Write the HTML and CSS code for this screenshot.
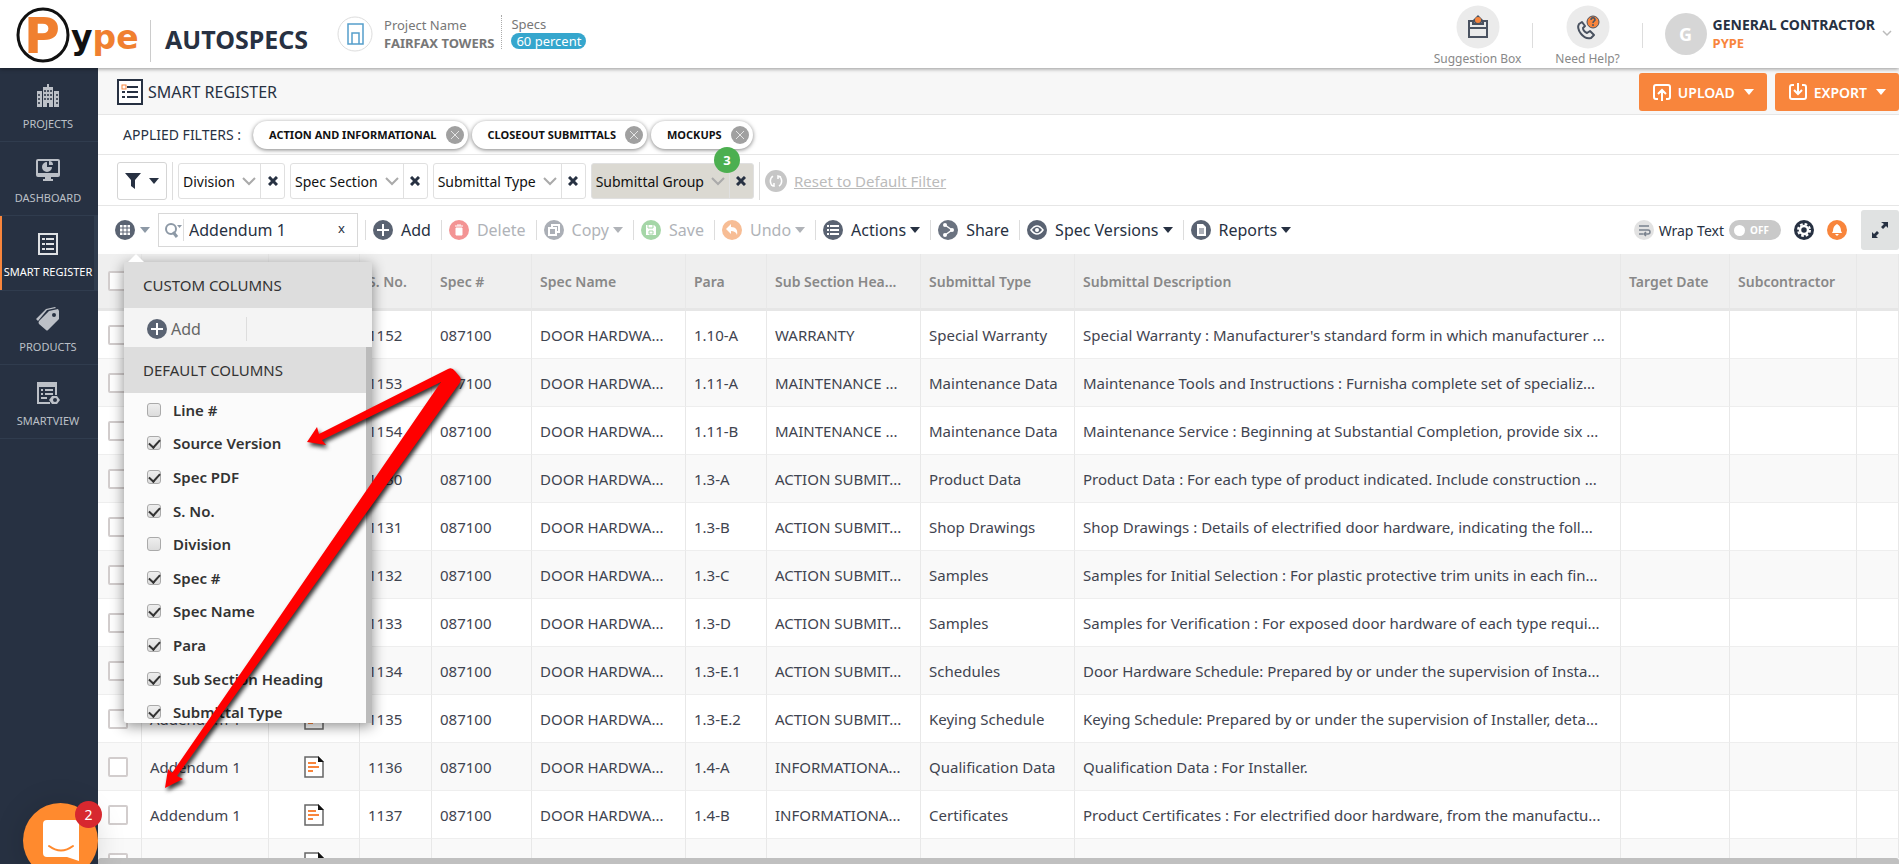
FILE: index.html
```html
<!DOCTYPE html>
<html lang="en">
<head>
    <meta charset="UTF-8">
    <meta name="viewport" content="width=device-width, initial-scale=1.0">
    <title>Pype AutoSpecs - Smart Register</title>
    <link rel="stylesheet" href="styles.css">
</head>
<body>
    <!-- shared icons -->
    <svg class="sprite" aria-hidden="true">
        <symbol id="i-doc" viewBox="0 0 20 22">
            <path d="M1 1h13l5 5v15H1z" fill="#fff" stroke="#666" stroke-width="1.5"/>
            <path d="M14 0l6 6h-6z" fill="#111"/>
            <path d="M4 7h8M4 11h11M4 15h5" stroke="#f8853c" stroke-width="2"/>
        </symbol>
        <symbol id="i-chev" viewBox="0 0 14 10">
            <path d="M1 2l6 6 6-6" fill="none" stroke="#aaa" stroke-width="2"/>
        </symbol>
        <symbol id="i-x" viewBox="0 0 10 10">
            <path d="M1 1l8 8M9 1l-8 8" stroke="#273142" stroke-width="3"/>
        </symbol>
        <symbol id="i-chipx" viewBox="0 0 18 18">
            <circle cx="9" cy="9" r="9" fill="#a0a0a0"/>
            <path d="M5 5l8 8M13 5l-8 8" stroke="#e4e4e4" stroke-width="1"/>
        </symbol>
        <symbol id="i-add" viewBox="0 0 20 20">
            <circle cx="10" cy="10" r="10" fill="#5a6372"/>
            <path d="M10 4v12M4 10h12" stroke="#fff" stroke-width="2"/>
        </symbol>
    </svg>

    <header class="header">
        <a class="logo" href="#" aria-label="Pype">
            <svg width="140" height="60" viewBox="0 0 140 60">
                <ellipse cx="43" cy="31" rx="25" ry="26" fill="#fff" stroke="#111" stroke-width="3"/>
                <text class="logo-text" x="24" y="49" font-size="49" fill="#f08030">P</text>
                <text class="logo-text" x="71" y="45" font-size="33"><tspan fill="#111">y</tspan><tspan fill="#f08030">pe</tspan></text>
            </svg>
        </a>
        <div class="product">AUTOSPECS</div>
        <div class="project">
            <svg width="36" height="36" viewBox="0 0 36 36">
                <circle cx="18" cy="18" r="17" fill="#fff" stroke="#ddd"/>
                <path d="M11 28V8h15v20zM15 28v-11h7v11" fill="none" stroke="#559fcb" stroke-width="1.5"/>
            </svg>
            <div class="project-name">
                <span>Project Name</span>
                <strong>FAIRFAX TOWERS</strong>
            </div>
            <div class="specs">
                <span>Specs</span>
                <span class="pill">60 percent</span>
            </div>
        </div>
        <nav class="help">
            <a class="help-item" href="#">
                <svg width="44" height="44" viewBox="0 0 44 44">
                    <circle cx="22" cy="22" r="21.500" fill="#ebebeb"/>
                    <path d="M13 16h18v16H13zM13 23h18M17 16v3h10v-3" fill="none" stroke="#4a5260" stroke-width="2"/>
                    <path d="M22 10l5 5-2 4h-6l-2-4z" fill="#4a5260"/>
                    <circle cx="22" cy="15" r="3" fill="#f8853c"/>
                </svg>
                <span>Suggestion Box</span>
            </a>
            <a class="help-item" href="#">
                <svg width="44" height="44" viewBox="0 0 44 44">
                    <circle cx="22" cy="22" r="21.500" fill="#ebebeb"/>
                    <path d="M13 19c-3 5 4 16 12 14l3-3-4-4-3 2c-2-1-4-3-4-5l2-2-3-4z" fill="none" stroke="#4a5260" stroke-width="2" stroke-linejoin="round"/>
                    <circle cx="27" cy="17" r="6" fill="#f8853c" stroke="#4a5260" stroke-width="1"/>
                    <path d="M25 15c0-3 4-3 4 0 0 1-2 1-2 3M27 19v2" fill="none" stroke="#4a5260" stroke-width="1.500"/>
                </svg>
                <span>Need Help?</span>
            </a>
        </nav>
        <button class="user">
            <span class="avatar">G</span>
            <span class="user-name">GENERAL CONTRACTOR<em>PYPE</em></span>
            <svg width="12" height="8" viewBox="0 0 12 8"><path d="M2 1l4 4 4-4" fill="none" stroke="#bbb" stroke-width="1.500"/></svg>
        </button>
    </header>

    <div class="main">
        <nav class="sidebar">
            <a href="#">
                <svg width="24" height="24" viewBox="0 0 24 24" fill="#bcc0c7">
                    <path d="M1 7h5v16H1zM18 7h5v16h-5zM7 3h4V0h2v3h4v20H7z"/>
                    <path d="M9 6v11M12 6v11M15 6v11M3 10v11M21 10v11" stroke="#273142" stroke-width="1.500" stroke-dasharray="2 2"/>
                    <path d="M11 19h2v4h-2z" fill="#273142"/>
                </svg>
                PROJECTS
            </a>
            <a href="#">
                <svg width="24" height="24" viewBox="0 0 24 24">
                    <rect x="1" y="2" width="22" height="16" rx="1" fill="none" stroke="#bcc0c7" stroke-width="2"/>
                    <path d="M1 15h22v3H1zM9 18h6v3h2v2H7v-2h2z" fill="#bcc0c7"/>
                    <path d="M11 4v5h5a5 5 0 1 1-5-5z" fill="#bcc0c7"/>
                    <path d="M13 3a4 4 0 0 1 4 4h-4z" fill="#bcc0c7"/>
                </svg>
                DASHBOARD
            </a>
            <a class="active" href="#">
                <svg width="24" height="24" viewBox="0 0 24 24">
                    <rect x="3" y="2" width="18" height="20" fill="none" stroke="#dfe1e4" stroke-width="2"/>
                    <path d="M6 7h3M6 12h3M6 17h3M10 7h8M10 12h8M10 17h8" stroke="#dfe1e4" stroke-width="2"/>
                </svg>
                SMART REGISTER
            </a>
            <a href="#">
                <svg width="24" height="24" viewBox="0 0 24 24" fill="#bcc0c7">
                    <path d="M0 12L10 2l9-2 1 1-9 2-9 11z"/>
                    <path d="M13 4l9-2 1 2v8l-11 11q-1 1-2 0l-7-6q-1-1 0-3z"/>
                    <circle cx="18" cy="8" r="2" fill="#273142"/>
                </svg>
                PRODUCTS
            </a>
            <a href="#">
                <svg width="24" height="24" viewBox="0 0 24 24">
                    <path d="M2 2h18v12M2 2v20h12" fill="none" stroke="#bcc0c7" stroke-width="2"/>
                    <path d="M1 1h20v5H1z" fill="#bcc0c7"/>
                    <path d="M5 9h2M5 13h2M9 9h8M9 13h8M5 17h6" stroke="#bcc0c7" stroke-width="2"/>
                    <path d="M13 19l3-4h5l3 4-3 4h-5z" fill="#bcc0c7"/>
                    <circle cx="19" cy="19" r="2" fill="#273142"/>
                </svg>
                SMARTVIEW
            </a>
        </nav>

        <main class="content">
            <div class="title-bar">
                <svg width="26" height="26" viewBox="0 0 26 26">
                    <rect x="1" y="1" width="24" height="24" fill="#fff" stroke="#273142" stroke-width="2"/>
                    <path d="M10 8h11M10 13h11M10 18h11M5 13h3M5 18h3" stroke="#273142" stroke-width="2"/>
                    <rect x="5" y="6" width="4" height="4" fill="none" stroke="#f8853c"/>
                </svg>
                <h1>SMART REGISTER</h1>
                <button class="btn-orange">
                    <svg width="20" height="20" viewBox="0 0 20 20" fill="none" stroke="#fff" stroke-width="2"><path d="M6 17H4q-2 0-2-2V5q0-2 2-2h12q2 0 2 2v10q0 2-2 2h-2M10 19V8M6 12l4-4 4 4"/></svg>
                    UPLOAD <i class="caret"></i>
                </button>
                <button class="btn-orange">
                    <svg width="20" height="20" viewBox="0 0 20 20" fill="none" stroke="#fff" stroke-width="2"><path d="M6 3H4q-2 0-2 2v10q0 2 2 2h12q2 0 2-2V5q0-2-2-2h-2M10 1v11M6 8l4 4 4-4"/></svg>
                    EXPORT <i class="caret"></i>
                </button>
            </div>

            <div class="applied">
                <span class="applied-label">APPLIED FILTERS :</span>
                <span class="chip">ACTION AND INFORMATIONAL <button aria-label="Remove"><svg width="18" height="18"><use href="#i-chipx"/></svg></button></span>
                <span class="chip">CLOSEOUT SUBMITTALS <button aria-label="Remove"><svg width="18" height="18"><use href="#i-chipx"/></svg></button></span>
                <span class="chip">MOCKUPS <button aria-label="Remove"><svg width="18" height="18"><use href="#i-chipx"/></svg></button></span>
            </div>

            <div class="filters">
                <button class="funnel" aria-label="Filters">
                    <svg width="16" height="16" viewBox="0 0 16 16"><path d="M0 0h16l-6 7v9l-4-3V7z" fill="#273142"/></svg>
                    <i class="caret"></i>
                </button>
                <span class="line"></span>
                <div class="filter"><button>Division <svg width="14" height="10"><use href="#i-chev"/></svg></button><button class="remove" aria-label="Remove"><svg width="10" height="10"><use href="#i-x"/></svg></button></div>
                <div class="filter"><button>Spec Section <svg width="14" height="10"><use href="#i-chev"/></svg></button><button class="remove" aria-label="Remove"><svg width="10" height="10"><use href="#i-x"/></svg></button></div>
                <div class="filter"><button>Submittal Type <svg width="14" height="10"><use href="#i-chev"/></svg></button><button class="remove" aria-label="Remove"><svg width="10" height="10"><use href="#i-x"/></svg></button></div>
                <div class="filter selected"><button>Submittal Group <svg width="14" height="10"><use href="#i-chev"/></svg></button><button class="remove" aria-label="Remove"><svg width="10" height="10"><use href="#i-x"/></svg></button><span class="count">3</span></div>
                <span class="line"></span>
                <a class="reset" href="#">
                    <svg width="22" height="22" viewBox="0 0 22 22"><circle cx="11" cy="11" r="11" fill="#c6c6c6"/><path d="M8 6a6 6 0 0 0 0 10M14 6a6 6 0 0 1 0 10M6 15l3 1v-3M16 7l-3-1v3" fill="none" stroke="#fff" stroke-width="1.500"/></svg>
                    <span>Reset to Default Filter</span>
                </a>
            </div>

            <div class="toolbar">
                <div class="columns">
                    <button class="grid-btn" aria-label="Columns">
                        <svg width="20" height="20" viewBox="0 0 20 20"><circle cx="10" cy="10" r="10" fill="#5a6372"/><path d="M5 5h10v10H5z" fill="#fff"/><path d="M8 5v10M12 5v10M5 8h10M5 12h10" stroke="#5a6372"/></svg>
                        <i class="caret"></i>
                    </button>
                    <div class="popup">
                        <h2>CUSTOM COLUMNS</h2>
                        <div class="popup-add">
                            <button><svg width="20" height="20"><use href="#i-add"/></svg>Add</button>
                        </div>
                        <div class="popup-scroll">
                            <h2>DEFAULT COLUMNS</h2>
                            <div class="popup-list">
                                <label><input type="checkbox">Line #</label>
                                <label><input type="checkbox" checked>Source Version</label>
                                <label><input type="checkbox" checked>Spec PDF</label>
                                <label><input type="checkbox" checked>S. No.</label>
                                <label><input type="checkbox">Division</label>
                                <label><input type="checkbox" checked>Spec #</label>
                                <label><input type="checkbox" checked>Spec Name</label>
                                <label><input type="checkbox" checked>Para</label>
                                <label><input type="checkbox" checked>Sub Section Heading</label>
                                <label><input type="checkbox" checked>Submittal Type</label>
                            </div>
                        </div>
                    </div>
                </div>
                <div class="search">
                    <svg width="18" height="16" viewBox="0 0 18 16"><circle cx="6" cy="7" r="5" fill="none" stroke="#8d99a6" stroke-width="2"/><path d="M8 10l4 5" stroke="#8d99a6" stroke-width="3"/><path d="M12 3h5l-2.500 3z" fill="#8d99a6"/></svg>
                    <input type="text" value="Addendum 1" aria-label="Search">
                    <button aria-label="Clear">x</button>
                </div>
                <div class="tools">
                    <button><svg width="20" height="20"><use href="#i-add"/></svg>Add</button>
                    <button class="off">
                        <svg width="20" height="20" viewBox="0 0 20 20"><circle cx="10" cy="10" r="10" fill="#f39494"/><path d="M6 6h8M8 5h4M7 8h6v7H7z" stroke="#fff" stroke-width="1" fill="#fff"/></svg>Delete
                    </button>
                    <button class="off">
                        <svg width="20" height="20" viewBox="0 0 20 20"><circle cx="10" cy="10" r="10" fill="#abafb6"/><path d="M5 8h7v7H5zM8 8V5h7v7h-3" fill="none" stroke="#fff" stroke-width="2"/></svg>Copy<i class="caret"></i>
                    </button>
                    <button class="off">
                        <svg width="20" height="20" viewBox="0 0 20 20"><circle cx="10" cy="10" r="10" fill="#a5d6a7"/><path d="M5 5h8l2 2v8H5z" fill="#fff"/><path d="M7 5v3h5V5M8 11h4v3H8z" fill="none" stroke="#a5d6a7"/></svg>Save
                    </button>
                    <button class="off">
                        <svg width="20" height="20" viewBox="0 0 20 20"><circle cx="10" cy="10" r="10" fill="#f7bd95"/><path d="M4 9l5-5v3c5 0 7 3 6 8-1-3-3-4-6-4v3z" fill="#fff"/></svg>Undo<i class="caret"></i>
                    </button>
                    <button>
                        <svg width="20" height="20" viewBox="0 0 20 20"><circle cx="10" cy="10" r="10" fill="#5a6372"/><path d="M4 6h2M4 10h2M4 14h2M7 6h9M7 10h9M7 14h9" stroke="#fff" stroke-width="2"/></svg>Actions<i class="caret"></i>
                    </button>
                    <button>
                        <svg width="20" height="20" viewBox="0 0 20 20"><circle cx="10" cy="10" r="10" fill="#6b7380"/><path d="M7 5l7 5-7 5" fill="none" stroke="#fff" stroke-width="1.500"/><circle cx="7" cy="5" r="2" fill="#fff"/><circle cx="14" cy="10" r="2" fill="#fff"/><circle cx="7" cy="15" r="2" fill="#fff"/></svg>Share
                    </button>
                    <button>
                        <svg width="20" height="20" viewBox="0 0 20 20"><circle cx="10" cy="10" r="10" fill="#5a6372"/><path d="M4 10q6-8 12 0-6 8-12 0z" fill="none" stroke="#fff" stroke-width="1.500"/><circle cx="10" cy="10" r="2" fill="#fff"/></svg>Spec Versions<i class="caret"></i>
                    </button>
                    <button>
                        <svg width="20" height="20" viewBox="0 0 20 20"><circle cx="10" cy="10" r="10" fill="#5a6372"/><path d="M6 4h6l3 3v9H6z" fill="#fff"/><path d="M8 9h5M8 11h5M8 13h5" stroke="#5a6372"/></svg>Reports<i class="caret"></i>
                    </button>
                </div>
                <div class="options">
                    <svg width="20" height="20" viewBox="0 0 20 20"><circle cx="10" cy="10" r="10" fill="#e2e2e2"/><path d="M5 6h10M5 10h9q2 0 2 2t-2 2h-3M5 14h4M12 12l-2 2 2 2" fill="none" stroke="#7a828e" stroke-width="1.500"/></svg>
                    <span>Wrap Text</span>
                    <button class="toggle" role="switch" aria-checked="false" aria-label="Wrap Text"><i></i>OFF</button>
                    <button class="round" aria-label="Settings">
                        <svg width="20" height="20" viewBox="0 0 20 20"><circle cx="10" cy="10" r="10" fill="#273142"/><circle cx="10" cy="10" r="6" fill="none" stroke="#fff" stroke-width="2" stroke-dasharray="2.700 2"/><circle cx="10" cy="10" r="4" fill="none" stroke="#fff" stroke-width="2.500"/></svg>
                    </button>
                    <button class="round" aria-label="Notifications">
                        <svg width="20" height="20" viewBox="0 0 20 20"><circle cx="10" cy="10" r="10" fill="#f8853c"/><path d="M10 4q4 2 4 7l1 2H5l1-2q0-5 4-7zM8 14h4l-2 2z" fill="#fff"/></svg>
                    </button>
                    <button class="expand" aria-label="Full screen">
                        <svg width="16" height="16" viewBox="0 0 16 16" fill="#273142"><path d="M9 0h7v6l-2-2-3 3-2-2 3-3zM0 10l2 2 3-3 2 2-3 3 2 2H0z"/></svg>
                    </button>
                </div>
            </div>

            <div class="table-wrap">
                <table>
                    <colgroup>
                        <col class="c-check"><col class="c-source"><col class="c-pdf"><col class="c-no"><col class="c-spec"><col class="c-name"><col class="c-para"><col class="c-name"><col class="c-name"><col><col class="c-date"><col class="c-sub"><col class="c-end">
                    </colgroup>
                    <thead>
                        <tr><th><input type="checkbox" aria-label="Select all"></th><th></th><th></th><th>S. No.</th><th>Spec #</th><th>Spec Name</th><th>Para</th><th>Sub Section Hea...</th><th>Submittal Type</th><th>Submittal Description</th><th>Target Date</th><th>Subcontractor</th><th></th></tr>
                    </thead>
                    <tbody>
                        <tr><td><input type="checkbox" aria-label="Select 1152"></td><td></td><td></td><td>1152</td><td>087100</td><td>DOOR HARDWA...</td><td>1.10-A</td><td>WARRANTY</td><td>Special Warranty</td><td>Special Warranty : Manufacturer's standard form in which manufacturer ...</td><td></td><td></td><td></td></tr>
                        <tr><td><input type="checkbox" aria-label="Select 1153"></td><td></td><td></td><td>1153</td><td>087100</td><td>DOOR HARDWA...</td><td>1.11-A</td><td>MAINTENANCE ...</td><td>Maintenance Data</td><td>Maintenance Tools and Instructions : Furnisha complete set of specializ...</td><td></td><td></td><td></td></tr>
                        <tr><td><input type="checkbox" aria-label="Select 1154"></td><td></td><td></td><td>1154</td><td>087100</td><td>DOOR HARDWA...</td><td>1.11-B</td><td>MAINTENANCE ...</td><td>Maintenance Data</td><td>Maintenance Service : Beginning at Substantial Completion, provide six ...</td><td></td><td></td><td></td></tr>
                        <tr><td><input type="checkbox" aria-label="Select 1130"></td><td></td><td></td><td>1130</td><td>087100</td><td>DOOR HARDWA...</td><td>1.3-A</td><td>ACTION SUBMIT...</td><td>Product Data</td><td>Product Data : For each type of product indicated. Include construction ...</td><td></td><td></td><td></td></tr>
                        <tr><td><input type="checkbox" aria-label="Select 1131"></td><td></td><td></td><td>1131</td><td>087100</td><td>DOOR HARDWA...</td><td>1.3-B</td><td>ACTION SUBMIT...</td><td>Shop Drawings</td><td>Shop Drawings : Details of electrified door hardware, indicating the foll...</td><td></td><td></td><td></td></tr>
                        <tr><td><input type="checkbox" aria-label="Select 1132"></td><td></td><td></td><td>1132</td><td>087100</td><td>DOOR HARDWA...</td><td>1.3-C</td><td>ACTION SUBMIT...</td><td>Samples</td><td>Samples for Initial Selection : For plastic protective trim units in each fin...</td><td></td><td></td><td></td></tr>
                        <tr><td><input type="checkbox" aria-label="Select 1133"></td><td></td><td></td><td>1133</td><td>087100</td><td>DOOR HARDWA...</td><td>1.3-D</td><td>ACTION SUBMIT...</td><td>Samples</td><td>Samples for Verification : For exposed door hardware of each type requi...</td><td></td><td></td><td></td></tr>
                        <tr><td><input type="checkbox" aria-label="Select 1134"></td><td></td><td></td><td>1134</td><td>087100</td><td>DOOR HARDWA...</td><td>1.3-E.1</td><td>ACTION SUBMIT...</td><td>Schedules</td><td>Door Hardware Schedule: Prepared by or under the supervision of Insta...</td><td></td><td></td><td></td></tr>
                        <tr><td><input type="checkbox" aria-label="Select 1135"></td><td>Addendum 1</td><td><svg width="20" height="22"><use href="#i-doc"/></svg></td><td>1135</td><td>087100</td><td>DOOR HARDWA...</td><td>1.3-E.2</td><td>ACTION SUBMIT...</td><td>Keying Schedule</td><td>Keying Schedule: Prepared by or under the supervision of Installer, deta...</td><td></td><td></td><td></td></tr>
                        <tr><td><input type="checkbox" aria-label="Select 1136"></td><td>Addendum 1</td><td><svg width="20" height="22"><use href="#i-doc"/></svg></td><td>1136</td><td>087100</td><td>DOOR HARDWA...</td><td>1.4-A</td><td>INFORMATIONA...</td><td>Qualification Data</td><td>Qualification Data : For Installer.</td><td></td><td></td><td></td></tr>
                        <tr><td><input type="checkbox" aria-label="Select 1137"></td><td>Addendum 1</td><td><svg width="20" height="22"><use href="#i-doc"/></svg></td><td>1137</td><td>087100</td><td>DOOR HARDWA...</td><td>1.4-B</td><td>INFORMATIONA...</td><td>Certificates</td><td>Product Certificates : For electrified door hardware, from the manufactu...</td><td></td><td></td><td></td></tr>
                        <tr><td><input type="checkbox" aria-label="Select 1138"></td><td>Addendum 1</td><td><svg width="20" height="22"><use href="#i-doc"/></svg></td><td>1138</td><td>087100</td><td>DOOR HARDWA...</td><td>1.4-C</td><td>INFORMATIONA...</td><td>Test Reports</td><td>Product Test Reports : For compliance with accessibility requirements ...</td><td></td><td></td><td></td></tr>
                    </tbody>
                </table>
            </div>
            <div class="scroll-x"></div>
        </main>
    </div>

    <!-- arrows from the Source Version option to its column -->
    <svg class="arrows" width="340" height="440" viewBox="150 360 340 440" aria-hidden="true">
        <path d="M448 369q4-2 7 2l5 6q2 3-1 7L177 776l6 3-18 9 3-19 4 4L441 382 322 440l4 5-19-3 10-15 2 7z" fill="#f00"/>
    </svg>

    <button class="chat" aria-label="Open chat">
        <svg width="36" height="42" viewBox="0 0 36 42"><path d="M4 0h28q4 0 4 4v37l-12-4H4q-4 0-4-4V4q0-4 4-4z" fill="#fff"/><path d="M6 26q12 9 24 0" fill="none" stroke="#ff8a2e" stroke-width="2" stroke-linecap="round"/></svg>
        <span>2</span>
    </button>
</body>
</html>
```
FILE: styles.css
```css
* {
    box-sizing: border-box;
}
body {
    margin: 0;
    height: 100vh;
    display: flex;
    flex-direction: column;
    position: relative;
    overflow: hidden;
    font-family: "Noto Sans", "Open Sans", sans-serif;
    font-size: 16px;
    color: #273142;
    background: #fff;
}
button {
    font: inherit;
    color: inherit;
    background: none;
    border: 0;
    padding: 0;
    display: flex;
    align-items: center;
    cursor: pointer;
}
a {
    color: inherit;
    text-decoration: none;
}
svg {
    display: block;
    flex: none;
}
.sprite {
    position: absolute;
    width: 0;
    height: 0;
}
.caret {
    border: 5px solid transparent;
    border-top: 6px solid currentColor;
    border-bottom: 0;
}

/* header */
.header {
    height: 68px;
    flex: none;
    display: flex;
    align-items: center;
    box-shadow: 0 1px 4px rgba(0, 0, 0, 0.4);
    position: relative;
    z-index: 2;
    background: #fff;
}
.logo {
    padding-right: 10px;
}
.logo-text {
    font-family: "DejaVu Sans", sans-serif;
    font-weight: bold;
}
.product {
    border-left: 1px solid #ccc;
    padding: 6px 0 0 14px;
    height: 42px;
    margin-top: 14px;
    font-size: 25px;
    line-height: 26px;
    font-weight: bold;
}
.project {
    display: flex;
    align-items: center;
    margin-left: 29px;
    font-size: 13px;
    line-height: 18px;
    color: #777;
}
.project-name, .specs {
    display: flex;
    flex-direction: column;
}
.project-name {
    margin-left: 11px;
    padding-right: 7px;
}
.specs {
    border-left: 1px dotted #aaa;
    padding-left: 9px;
    margin-bottom: 5px;
    align-items: flex-start;
}
.pill {
    background: #35a6cd;
    color: #fff;
    border-radius: 8px;
    padding: 0 5px;
    line-height: 16px;
}
.help {
    display: flex;
    margin-left: auto;
    align-self: flex-start;
}
.help-item {
    display: flex;
    flex-direction: column;
    align-items: center;
    position: relative;
    width: 110px;
    padding-top: 5px;
    font-size: 12px;
    line-height: 20px;
    color: #888;
}
.help-item::after {
    content: "";
    position: absolute;
    right: 0;
    top: 23px;
    height: 25px;
    border-right: 1px solid #ddd;
}
.user {
    margin-left: 22px;
    padding-right: 6px;
    text-align: left;
}
.avatar {
    width: 42px;
    height: 42px;
    border-radius: 50%;
    background: #d6d6d6;
    color: #fff;
    font-weight: bold;
    line-height: 42px;
    text-align: center;
    font-size: 18px;
}
.user-name {
    margin: 0 6px;
    font-size: 14px;
    line-height: 18px;
    font-weight: bold;
}
.user-name em {
    display: block;
    font-style: normal;
    font-size: 13px;
    color: #f8853c;
}

/* sidebar */
.main {
    flex: 1;
    min-height: 0;
    display: flex;
}
.sidebar {
    width: 98px;
    flex: none;
    background: #273142;
}
.sidebar a {
    display: flex;
    flex-direction: column;
    align-items: center;
    gap: 8px;
    height: 74px;
    padding: 16px 2px 0 0;
    border-bottom: 1px solid #303c4e;
    font-size: 11px;
    line-height: 16px;
    color: #bcc0c7;
    white-space: nowrap;
}
.sidebar .active {
    height: 75px;
    color: #fff;
    box-shadow: inset 2px 0 #f8853c, inset -4px 0 #303c4e;
}

/* content */
.content {
    flex: 1;
    min-width: 0;
    display: flex;
    flex-direction: column;
}
.title-bar {
    height: 47px;
    flex: none;
    display: flex;
    align-items: center;
    padding: 2px 0 0 19px;
    background: #f7f7f7;
    border-bottom: 1px solid #e6e6e6;
}
.title-bar h1 {
    margin: 0 auto 0 5px;
    font-size: 16px;
    font-weight: normal;
}
.btn-orange {
    height: 38px;
    gap: 6px;
    padding: 0 13px;
    margin-left: 8px;
    border-radius: 3px;
    background: #f8853c;
    color: #fff;
    font-size: 14px;
    font-weight: 600;
}
.btn-orange .caret {
    margin-left: 3px;
}
.applied {
    height: 40px;
    flex: none;
    display: flex;
    align-items: center;
    gap: 4px;
    padding-left: 25px;
    border-bottom: 1px solid #e6e6e6;
}
.applied-label {
    font-size: 14px;
    margin-right: 8px;
}
.chip {
    display: flex;
    align-items: center;
    gap: 9px;
    height: 28px;
    padding: 0 4px 0 16px;
    border-radius: 14px;
    box-shadow: 0 1px 4px rgba(0, 0, 0, 0.5);
    font-size: 11px;
    font-weight: bold;
    color: #111;
}
.filters {
    height: 51px;
    flex: none;
    display: flex;
    align-items: center;
    gap: 5px;
    padding: 2px 0 0 19px;
    border-bottom: 1px solid #e6e6e6;
}
.funnel {
    height: 38px;
    width: 50px;
    justify-content: center;
    gap: 8px;
    border: 1px solid #d5d5d5;
    border-radius: 3px;
}
.line {
    width: 1px;
    height: 38px;
    background: #ddd;
}
.filter {
    display: flex;
    height: 36px;
    position: relative;
    border: 1px solid #e0e0e0;
    border-radius: 3px;
    font-size: 14px;
    color: #111;
}
.filter button {
    gap: 7px;
    padding: 0 4px;
}
.filter .remove {
    width: 24px;
    justify-content: center;
    border-left: 1px solid #e0e0e0;
}
.selected {
    background: #dbd9d2;
}
.count {
    position: absolute;
    right: 13px;
    top: -17px;
    width: 26px;
    height: 26px;
    border-radius: 50%;
    background: #4caf50;
    color: #fff;
    font-size: 13px;
    font-weight: bold;
    line-height: 26px;
    text-align: center;
}
.reset {
    display: flex;
    align-items: center;
    gap: 7px;
    font-size: 15px;
    color: #bbb;
}
.reset span {
    text-decoration: underline;
}

/* toolbar */
.toolbar {
    height: 48px;
    flex: none;
    display: flex;
    align-items: center;
    padding-left: 17px;
}
.columns {
    position: relative;
}
.grid-btn {
    gap: 5px;
    color: #8d99a6;
}
.search {
    display: flex;
    align-items: center;
    width: 200px;
    height: 34px;
    margin: 0 7px 0 8px;
    padding: 0 12px 0 6px;
    border: 1px solid #d8d8d8;
}
.search input {
    flex: 1;
    min-width: 0;
    height: 22px;
    border: 0;
    border-left: 1px solid #ddd;
    padding: 0 0 0 5px;
    outline: 0;
    font: inherit;
    color: #273142;
}
.search button {
    font-size: 13px;
    padding-bottom: 4px;
}
.tools {
    display: flex;
}
.tools button {
    height: 20px;
    gap: 8px;
    padding: 0 10px 0 7px;
    border-left: 1px solid #ddd;
}
.tools .caret {
    margin-left: -4px;
}
.tools .off {
    color: #b0b3b8;
}
.options {
    display: flex;
    align-items: center;
    margin-left: auto;
    font-size: 14px;
}
.options span {
    margin: 0 5px;
}
.toggle {
    width: 52px;
    height: 20px;
    gap: 5px;
    padding: 0 5px;
    border-radius: 10px;
    background: #c9c9c9;
    color: #fff;
    font-size: 10px;
    font-weight: bold;
}
.toggle i {
    width: 11px;
    height: 11px;
    border-radius: 50%;
    background: #fff;
}
.round {
    margin-left: 13px;
}
.expand {
    width: 38px;
    height: 40px;
    margin-left: 14px;
    justify-content: center;
    border-radius: 3px;
    background: #e0e2e2;
}

/* column chooser */
.popup {
    position: absolute;
    left: 9px;
    top: 42px;
    z-index: 5;
    width: 248px;
    background: #fbfbfb;
    border-radius: 3px;
    box-shadow: 0 3px 14px rgba(0, 0, 0, 0.45);
    color: #333;
}
.popup::before {
    content: "";
    position: absolute;
    left: 4px;
    top: -8px;
    border: 8px solid transparent;
    border-top: 0;
    border-bottom-color: #fff;
}
.popup h2 {
    margin: 0;
    padding-left: 19px;
    font-size: 15px;
    line-height: 46px;
    font-weight: normal;
    background: #ddd;
}
.popup-add {
    height: 39px;
    display: flex;
    align-items: center;
    padding: 2px 0 0 23px;
    background: #f4f4f4;
    color: #666;
}
.popup-add button {
    width: 100px;
    height: 24px;
    gap: 4px;
    border-right: 1px solid #ddd;
}
.popup-scroll {
    height: 376px;
    overflow: hidden;
    border-right: 6px solid #bbb;
}
.popup-list {
    display: grid;
    grid-auto-rows: 1fr;
    height: 336px;
    padding-left: 23px;
    font-size: 15px;
    font-weight: 600;
}
.popup-list label {
    display: flex;
    align-items: center;
    gap: 12px;
}
.popup-list input {
    appearance: none;
    display: grid;
    place-items: center;
    width: 14px;
    height: 14px;
    margin: 0;
    border: 1px solid #aaa;
    border-radius: 3px;
    background: linear-gradient(#eee, #dcdcdc);
}
.popup-list input:checked::after {
    content: "";
    width: 5px;
    height: 9px;
    margin-bottom: 3px;
    border: solid #333;
    border-width: 0 2px 2px 0;
    transform: rotate(42deg);
}

/* register table */
.table-wrap {
    flex: 1;
    min-height: 0;
    overflow: hidden;
}
table {
    width: 100%;
    table-layout: fixed;
    border-collapse: separate;
    border-spacing: 0;
    font-size: 15px;
}
.c-check { width: 44px; }
.c-source { width: 127px; }
.c-pdf { width: 91px; }
.c-no { width: 72px; }
.c-spec { width: 100px; }
.c-name { width: 154px; }
.c-para { width: 81px; }
.c-date { width: 109px; }
.c-sub { width: 127px; }
.c-end { width: 42px; }
th, td {
    padding: 0 8px;
    text-align: left;
    white-space: nowrap;
    overflow: hidden;
    text-overflow: ellipsis;
    border-right: 1px solid #e8e8e8;
}
th {
    height: 57px;
    font-size: 14px;
    font-weight: 600;
    color: #888;
    background: #efefef;
    border-bottom: 3px solid #e6e6e6;
}
td {
    height: 48px;
    color: #3f4450;
    border-bottom: 1px solid #eee;
}
tbody tr:nth-child(even) {
    background: #f9f9f9;
}
td svg {
    margin: 0 auto;
}
th input, td input {
    appearance: none;
    display: block;
    width: 20px;
    height: 20px;
    margin: 0 2px;
    border: 2px solid #d2cdcd;
    border-radius: 2px;
    background: #fff;
}
.scroll-x {
    height: 6px;
    flex: none;
    background: #c0c0c0;
    border-radius: 3px 3px 0 0;
}

/* overlays */
.arrows {
    position: absolute;
    left: 150px;
    top: 360px;
    z-index: 6;
    pointer-events: none;
    filter: drop-shadow(2px 3px 2px rgba(0, 0, 0, 0.8));
}
.chat {
    position: absolute;
    left: 23px;
    bottom: -14px;
    z-index: 7;
    width: 75px;
    height: 75px;
    justify-content: center;
    border-radius: 50%;
    background: #ff8a2e;
    box-shadow: 0 2px 30px rgba(0, 0, 0, 0.15);
}
.chat span {
    position: absolute;
    right: -4px;
    top: -2px;
    width: 27px;
    height: 27px;
    border-radius: 50%;
    background: #d7282f;
    color: #fff;
    font-size: 14px;
    line-height: 27px;
}
```
